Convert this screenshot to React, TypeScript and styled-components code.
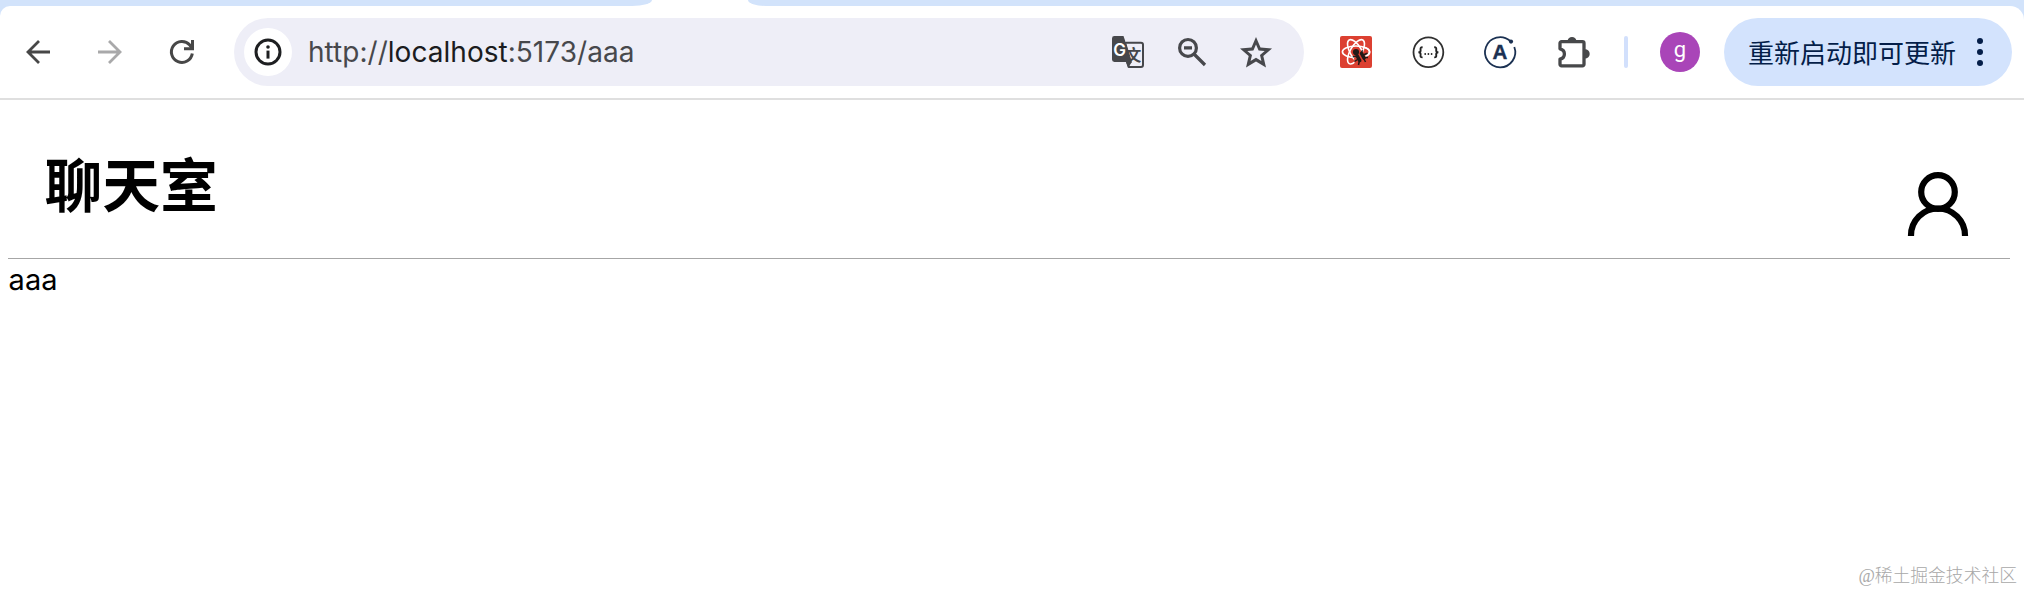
import React from 'react';
import styled, { createGlobalStyle } from 'styled-components';

const ui = `Inter, 'Noto Sans CJK SC', sans-serif`;

const GlobalStyle = createGlobalStyle`
  * { box-sizing: border-box; }
  body { margin: 0; background: #fff; font-family: ${ui}; overflow: hidden; }
  svg { display: block; flex: none; overflow: visible; }
`;

const Window = styled.div`
  width: 2024px;
  height: 592px;
  display: flex;
  flex-direction: column;
  background: #fff;
`;

const TabStrip = styled.div`
  height: 6px;
  display: flex;
  justify-content: space-between;
  background: #fff;
`;

const StripPart = styled.div<{ $side: 'left' | 'right' }>`
  width: ${p => (p.$side === 'left' ? '652px' : '1276px')};
  background: #d2e3fb;
  border-radius: ${p => (p.$side === 'left' ? '0 0 20px 0 / 0 0 6px 0' : '0 0 0 18px / 0 0 0 6px')};
`;

const ToolbarBack = styled.div`
  background: #d2e3fb;
`;

const Toolbar = styled.header`
  height: 94px;
  display: flex;
  align-items: center;
  padding-left: 2px;
  background: #fff;
  border-radius: 10px 14px 0 0;
  border-bottom: 2px solid #dfdfdf;
`;

const Slot = styled.div<{ $w: number }>`
  width: ${p => p.$w}px;
  flex: none;
  display: flex;
  justify-content: center;
`;

const AddressBar = styled.div`
  width: 1070px;
  height: 68px;
  margin-left: 16px;
  padding: 0 16px 0 10px;
  display: flex;
  align-items: center;
  border-radius: 34px;
  background: #eeeef7;
`;

const SiteInfo = styled.div`
  width: 48px;
  height: 48px;
  border-radius: 50%;
  background: #fff;
  display: flex;
  align-items: center;
  justify-content: center;
`;

const Url = styled.div`
  flex: 1;
  margin-left: 16px;
  font: 400 28px/40px ${ui};
  letter-spacing: 0.03px;
  color: #47484c;
  white-space: nowrap;
`;

const Host = styled.span`
  color: #1b1c20;
`;

const Extensions = styled.div`
  display: flex;
  align-items: center;
  margin-left: 16px;
`;

const Divider = styled.div`
  width: 4px;
  height: 32px;
  margin: 0 32px 0 12px;
  border-radius: 2px;
  background: #d2e0fc;
`;

const Avatar = styled.div`
  width: 40px;
  height: 40px;
  border-radius: 50%;
  background: #a945b8;
  color: #fff;
  text-align: center;
  font: 400 22px/35px Roboto, sans-serif;
`;

const UpdateButton = styled.button`
  width: 288px;
  height: 68px;
  margin-left: 24px;
  padding: 0 29px 0 24px;
  border: 0;
  border-radius: 34px;
  background: #d3e3fd;
  color: #041e49;
  display: flex;
  align-items: center;
  justify-content: space-between;
  font: 400 26px/40px 'Noto Sans CJK SC', sans-serif;
  white-space: nowrap;
`;

const Page = styled.main`
  flex: 1;
  display: flex;
  flex-direction: column;
  padding: 0 14px 6px 8px;
  color: #000;
`;

const PageHeader = styled.div`
  height: 159px;
  display: flex;
  justify-content: space-between;
  padding: 40px 42px 0 36.5px;
  border-bottom: 1px solid #a6a6a6;
`;

const Title = styled.h1`
  margin: 0;
  font: 700 57.8px/84px 'Noto Sans CJK SC', sans-serif;
`;

const UserLink = styled.div`
  margin-top: 32px;
`;

const Body = styled.div`
  flex: 1;
  padding: 3px 0 0 0.6px;
  font: 400 29px/36px ${ui};
`;

const Watermark = styled.footer`
  align-self: flex-end;
  margin-right: -7px;
  font: 300 17.8px/20px 'Liberation Serif', 'Noto Sans CJK SC', serif;
  color: #a8a8a8;
`;

const Arrow = ({ forward = false }: { forward?: boolean }) => (
  <svg width="24" height="24" viewBox="0 0 24 24" fill="none" stroke={forward ? '#a9a9aa' : '#474747'} strokeWidth="2.8">
    {forward ? <path d="M0 12H22M11 1L22 12L11 23" /> : <path d="M24 12H2M13 1L2 12L13 23" />}
  </svg>
);

const Reload = () => (
  <svg width="24" height="24" viewBox="0 0 24 24" fill="none" stroke="#474747" strokeWidth="3">
    <path d="M22.3 13.5A10.5 10.5 0 1 1 19.8 5L22 8" />
    <path d="M22.5 0V8.7H14" />
  </svg>
);

const Info = () => (
  <svg width="28" height="28" viewBox="0 0 28 28">
    <circle cx="14" cy="14" r="12" fill="none" stroke="#1e1f21" strokeWidth="3" />
    <circle cx="14" cy="9" r="1.8" fill="#1e1f21" />
    <path d="M14 12.6V20.6" stroke="#1e1f21" strokeWidth="3" />
  </svg>
);

const Translate = () => (
  <svg width="32" height="32" viewBox="0 0 32 32">
    <path d="M14 6.8H29a2 2 0 0 1 2 2V29a2 2 0 0 1-2 2H17L15 26" fill="none" stroke="#46474b" strokeWidth="2" />
    <text x="13.8" y="25" fontSize="15.5" fontWeight="700" fontFamily="'Noto Sans CJK SC', sans-serif" fill="#46474b">文</text>
    <path d="M2.4 0H11.5L13.4 5.5L19.5 26.5L16 32L14 26H2.4A2.4 2.4 0 0 1 0 23.6V2.4A2.4 2.4 0 0 1 2.4 0Z" fill="#46474b" />
    <path d="M13.4 6L19.5 26.5" stroke="#46474b" strokeWidth="1" />
    <text x="1.2" y="19.8" fontSize="17" fontWeight="600" fontFamily="Inter, sans-serif" fill="#fff">G</text>
  </svg>
);

const ZoomOut = () => (
  <svg width="28" height="28" viewBox="0 0 28 28" fill="none" stroke="#47484c" strokeWidth="3.2">
    <circle cx="10" cy="9.9" r="8.4" />
    <path d="M16 16L27 27M6 9.9H14" />
  </svg>
);

const Star = () => (
  <svg width="32" height="31" viewBox="0 0 32 31">
    <path
      d="M16 0L20.5 10.5L32 11.5L23.3 19L26 30.6L16 24.4L6 30.6L8.7 19L0 11.5L11.5 10.5ZM16 7.6L13.4 13.5L7.3 14L12 18.1L10.6 24.1L16 20.8L21.4 24.1L20 18.1L24.7 14L18.6 13.5Z"
      fillRule="evenodd"
      fill="#47484c"
    />
  </svg>
);

const ReactDebug = () => (
  <svg width="32" height="32" viewBox="0 0 32 32">
    <rect width="32" height="32" rx="2" fill="#dc4031" />
    <g fill="none" stroke="#fff" strokeWidth="1.6">
      <ellipse cx="16" cy="15.8" rx="13.6" ry="5.8" />
      <ellipse cx="16" cy="15.8" rx="13.6" ry="5.8" transform="rotate(60 16 15.8)" />
      <ellipse cx="16" cy="15.8" rx="13.6" ry="5.8" transform="rotate(120 16 15.8)" />
    </g>
    <path d="M14 22L17 18L24 16L29 22V30H15Z" fill="#dc4031" />
    <path d="M24 11.2C31 13 31.5 18.5 25.2 20.4" fill="none" stroke="#fff" strokeWidth="1.6" />
    <circle cx="16" cy="16" r="3.1" fill="#231a17" />
    <g stroke="#231a17" fill="none">
      <path d="M17.2 20L19.7 24.5M21.5 17.5L24 22" strokeWidth="3.6" strokeLinecap="round" />
      <path d="M18 20L12.8 20.8M19 22.5L14.5 25.5M19.5 24L18.5 29M21 17.8L22.5 14.2M23 19L27.5 17.2M23.5 21.5L28 21.5M23.5 22L25.5 26" strokeWidth="1.5" />
    </g>
  </svg>
);

const Braces = () => (
  <svg width="32" height="32" viewBox="0 0 32 32">
    <circle cx="16.4" cy="16.3" r="14.9" fill="#fff" stroke="#303030" strokeWidth="1.8" />
    <g fill="none" stroke="#222" strokeWidth="1.9">
      <path d="M10.6 11.2C7.9 11.2 8.6 12.7 8.6 14.4S7.8 16.3 6.4 16.3C7.8 16.3 8.6 16.5 8.6 18.2S7.9 21.4 10.6 21.4" />
      <path d="M22.2 11.2C24.9 11.2 24.2 12.7 24.2 14.4S25 16.3 26.4 16.3C25 16.3 24.2 16.5 24.2 18.2S24.9 21.4 22.2 21.4" />
    </g>
    <g fill="#222">
      <circle cx="13.2" cy="18" r="0.9" />
      <circle cx="16.4" cy="18" r="0.9" />
      <circle cx="19.6" cy="18" r="0.9" />
    </g>
  </svg>
);

const Apollo = () => (
  <svg width="32" height="32" viewBox="0 0 32 32">
    <path d="M30.3 11A15.1 15.1 0 1 1 26 4.8" fill="none" stroke="#1b3152" strokeWidth="1.8" />
    <circle cx="27" cy="5.6" r="2.1" fill="#1b3152" />
    <text x="16" y="22.6" textAnchor="middle" fontSize="20.5" fontWeight="700" fontFamily="'Liberation Sans', sans-serif" fill="#1b3152" stroke="#1b3152" strokeWidth="0.4">A</text>
  </svg>
);

const Puzzle = () => (
  <svg width="32" height="36" viewBox="0 0 32 36">
    <path
      d="M3.5 7.7H24.5A1.5 1.5 0 0 1 26 9.2V30.3A1.5 1.5 0 0 1 24.5 31.8H3.5A1.5 1.5 0 0 1 2 30.3V25.2C5 24.5 6.4 22.4 6.4 20S5 15.5 2 14.8V9.2A1.5 1.5 0 0 1 3.5 7.7Z"
      fill="none" stroke="#47484a" strokeWidth="3.3" strokeLinejoin="round"
    />
    <path d="M9.6 6.5A4.5 4.5 0 0 1 18.4 6.5ZM27 15.2A4.7 4.7 0 0 1 27 24.6Z" fill="#47484a" />
  </svg>
);

const Dots = () => (
  <svg width="6" height="28" viewBox="0 0 6 28" fill="#041e49">
    <circle cx="3" cy="3" r="3" />
    <circle cx="3" cy="14" r="3" />
    <circle cx="3" cy="25" r="3" />
  </svg>
);

const User = () => (
  <svg width="60" height="64" viewBox="0 0 60 64" fill="none" stroke="#000" strokeWidth="6.2">
    <circle cx="30" cy="20" r="16.8" />
    <path d="M3 64V63.5A27 27 0 0 1 57 63.5V64" />
  </svg>
);

export default function App() {
  return (
    <Window>
      <GlobalStyle />
      <TabStrip>
        <StripPart $side="left" />
        <StripPart $side="right" />
      </TabStrip>
      <ToolbarBack>
        <Toolbar>
          <Slot $w={72}><Arrow /></Slot>
          <Slot $w={72}><Arrow forward /></Slot>
          <Slot $w={72}><Reload /></Slot>
          <AddressBar>
            <SiteInfo><Info /></SiteInfo>
            <Url>http://<Host>localhost</Host>:5173/aaa</Url>
            <Slot $w={64}><Translate /></Slot>
            <Slot $w={64}><ZoomOut /></Slot>
            <Slot $w={64}><Star /></Slot>
          </AddressBar>
          <Extensions>
            <Slot $w={72}><ReactDebug /></Slot>
            <Slot $w={72}><Braces /></Slot>
            <Slot $w={72}><Apollo /></Slot>
            <Slot $w={76}><Puzzle /></Slot>
          </Extensions>
          <Divider />
          <Avatar>g</Avatar>
          <UpdateButton>重新启动即可更新<Dots /></UpdateButton>
        </Toolbar>
      </ToolbarBack>
      <Page>
        <PageHeader>
          <Title>聊天室</Title>
          <UserLink><User /></UserLink>
        </PageHeader>
        <Body>aaa</Body>
        <Watermark>@稀土掘金技术社区</Watermark>
      </Page>
    </Window>
  );
}
